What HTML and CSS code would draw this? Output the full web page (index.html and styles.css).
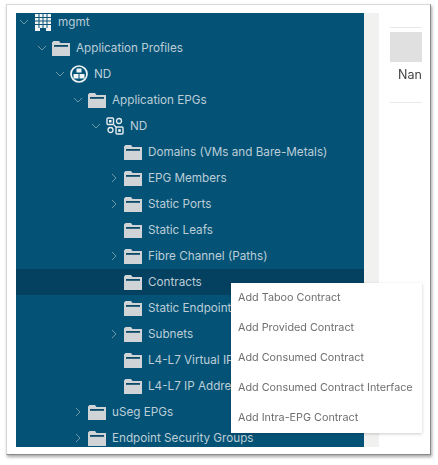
FILE: index.html
```html
<!DOCTYPE html>
<html lang="en">
  <head>
    <meta charset="UTF-8" />
    <meta name="viewport" content="width=device-width, initial-scale=1.0" />
    <title>mgmt tree</title>
    <link rel="stylesheet" href="styles.css">
  </head>

  <body>
    <svg class="defs" width="0" height="0">
      <symbol id="folder" viewBox="0 0 18 15">
        <path d="M0 1.500 1.500 0H7l1.500 2H18v13H0z" fill="#d0d4d7"/>
        <rect x="2" y="4" width="14" height="1.800" fill="#0b4a69"/>
      </symbol>
      <symbol id="chev-down" viewBox="0 0 10 10">
        <path d="M1 3l4 4 4-4" fill="none" stroke="#6f98ad"/>
      </symbol>
      <symbol id="chev-right" viewBox="0 0 10 10">
        <path d="M3 1l4 4-4 4" fill="none" stroke="#6f98ad"/>
      </symbol>
      <symbol id="tenant" viewBox="0 0 16 17">
        <path d="M0 0h16v17h-5v-3H5v3H0z" fill="#f2f5f6"/>
        <path d="M4 0v14M8 0v14M12 0v14M0 3.500h16M0 7h16M0 10.500h16" stroke="#0b5474" stroke-width="1"/>
      </symbol>
      <symbol id="profile" viewBox="0 0 18 18">
        <circle cx="9" cy="9" r="8" fill="none" stroke="#f2f5f6" stroke-width="1.700"/>
        <rect x="6.500" y="3.500" width="5" height="4" fill="#f2f5f6"/>
        <rect x="3.500" y="9" width="5" height="4.500" fill="#f2f5f6"/>
        <rect x="9.500" y="9" width="5" height="4.500" fill="#f2f5f6"/>
      </symbol>
      <symbol id="epg" viewBox="0 0 18 18">
        <rect x="1" y="1" width="6.500" height="6.500" rx="1" fill="none" stroke="#e6ecef" stroke-width="1.400"/>
        <rect x="3" y="3" width="2.500" height="2.500" fill="#f2f5f6"/>
        <circle cx="13" cy="4" r="2.500" fill="none" stroke="#e6ecef" stroke-width="1.300"/>
        <circle cx="4.500" cy="13" r="2.500" fill="none" stroke="#e6ecef" stroke-width="1.300"/>
        <rect x="10" y="10" width="7" height="7" rx="1" fill="none" stroke="#e6ecef" stroke-width="1.400"/>
        <rect x="12.200" y="12.200" width="2.600" height="2.600" fill="#f2f5f6"/>
        <path d="M7.500 7.500l3 3" stroke="#e6ecef" stroke-width="1.300"/>
      </symbol>
    </svg>

    <div class="frame">
      <div class="tree">
        <div class="row lvl0 first">
          <svg class="chev"><use href="#chev-down"/></svg>
          <svg class="icon tenant"><use href="#tenant"/></svg>
          <span>mgmt</span>
        </div>
        <div class="row lvl1">
          <svg class="chev"><use href="#chev-down"/></svg>
          <svg class="icon folder"><use href="#folder"/></svg>
          <span>Application Profiles</span>
        </div>
        <div class="row lvl2">
          <svg class="chev"><use href="#chev-down"/></svg>
          <svg class="icon"><use href="#profile"/></svg>
          <span>ND</span>
        </div>
        <div class="row lvl3">
          <svg class="chev"><use href="#chev-down"/></svg>
          <svg class="icon folder"><use href="#folder"/></svg>
          <span>Application EPGs</span>
        </div>
        <div class="row lvl4">
          <svg class="chev"><use href="#chev-down"/></svg>
          <svg class="icon"><use href="#epg"/></svg>
          <span>ND</span>
        </div>
        <div class="row lvl5">
          <i class="chev"></i>
          <svg class="icon folder"><use href="#folder"/></svg>
          <span>Domains (VMs and Bare-Metals)</span>
        </div>
        <div class="row lvl5">
          <svg class="chev"><use href="#chev-right"/></svg>
          <svg class="icon folder"><use href="#folder"/></svg>
          <span>EPG Members</span>
        </div>
        <div class="row lvl5">
          <svg class="chev"><use href="#chev-right"/></svg>
          <svg class="icon folder"><use href="#folder"/></svg>
          <span>Static Ports</span>
        </div>
        <div class="row lvl5">
          <i class="chev"></i>
          <svg class="icon folder"><use href="#folder"/></svg>
          <span>Static Leafs</span>
        </div>
        <div class="row lvl5">
          <svg class="chev"><use href="#chev-right"/></svg>
          <svg class="icon folder"><use href="#folder"/></svg>
          <span>Fibre Channel (Paths)</span>
        </div>
        <div class="row lvl5 selected">
          <i class="chev"></i>
          <svg class="icon folder"><use href="#folder"/></svg>
          <span>Contracts</span>
        </div>
        <div class="row lvl5">
          <i class="chev"></i>
          <svg class="icon folder"><use href="#folder"/></svg>
          <span>Static Endpoint</span>
        </div>
        <div class="row lvl5">
          <svg class="chev"><use href="#chev-right"/></svg>
          <svg class="icon folder"><use href="#folder"/></svg>
          <span>Subnets</span>
        </div>
        <div class="row lvl5">
          <i class="chev"></i>
          <svg class="icon folder"><use href="#folder"/></svg>
          <span>L4-L7 Virtual IPs</span>
        </div>
        <div class="row lvl5">
          <i class="chev"></i>
          <svg class="icon folder"><use href="#folder"/></svg>
          <span>L4-L7 IP Address Pool</span>
        </div>
        <div class="row lvl3">
          <svg class="chev"><use href="#chev-right"/></svg>
          <svg class="icon folder"><use href="#folder"/></svg>
          <span>uSeg EPGs</span>
        </div>
        <div class="row lvl3">
          <svg class="chev"><use href="#chev-right"/></svg>
          <svg class="icon folder"><use href="#folder"/></svg>
          <span>Endpoint Security Groups</span>
        </div>
      </div>

      <div class="scroll-strip"></div>

      <div class="side">
        <div class="side-head"></div>
        <div class="side-name">Nan</div>
      </div>

      <ul class="menu">
        <li>Add Taboo Contract</li>
        <li>Add Provided Contract</li>
        <li>Add Consumed Contract</li>
        <li>Add Consumed Contract Interface</li>
        <li>Add Intra-EPG Contract</li>
      </ul>
    </div>
  </body>
</html>
```

FILE: styles.css
```css
html,
body {
  margin: 0;
  height: 465px;
  overflow: hidden;
  background: #fff;
}

body {
  padding: 4px 7px 0 6px;
  box-sizing: border-box;
  font-family: Inter, "Liberation Sans", sans-serif;
}

.defs {
  position: absolute;
}

.frame {
  position: relative;
  display: flex;
  height: 451px;
  box-sizing: border-box;
  padding: 8px 0 7px 9px;
  background: #fff;
  border: 1px solid #d8d8d8;
  border-right-color: #8a8a8a;
  border-bottom-color: #8a8a8a;
  box-shadow: 1px 2px 3px rgba(0, 0, 0, 0.35);
  filter: blur(0.5px);
}

.tree {
  width: 348px;
  flex-shrink: 0;
  overflow: hidden;
  background: #045377;
  color: #bccdd6;
  font-size: 11.7px;
}

.row {
  display: flex;
  align-items: center;
  height: 26px;
}

.first {
  margin-top: -4px;
}

.lvl0 { padding-left: 3px; }
.lvl1 { padding-left: 21px; }
.lvl2 { padding-left: 39px; }
.lvl3 { padding-left: 57px; }
.lvl4 { padding-left: 75px; }
.lvl5 { padding-left: 93px; }

.selected {
  background: #04405f;
}

.chev {
  display: block;
  width: 10px;
  height: 10px;
  margin-right: 5px;
  flex-shrink: 0;
}

.icon {
  display: block;
  width: 18px;
  height: 18px;
  margin-right: 6px;
  flex-shrink: 0;
}

.folder {
  height: 15px;
}

.tenant {
  width: 16px;
  height: 17px;
  margin-left: 1px;
  margin-right: 7px;
}

.scroll-strip {
  width: 15px;
  flex-shrink: 0;
  background: #f1f1ef;
}

.side {
  width: 32px;
  height: 74px;
  margin: 14px 0 0 11px;
  overflow: hidden;
  border-top: 1px solid #e8e8e8;
  border-bottom: 1px solid #e8e8e8;
}

.side-head {
  height: 30px;
  margin-top: 4px;
  background: #e0e0e0;
}

.side-name {
  margin: 5px 0 0 8px;
  font-size: 12.5px;
  color: #444;
  white-space: nowrap;
}

.menu {
  position: absolute;
  left: 224px;
  top: 278px;
  width: 191px;
  margin: 0;
  padding: 0;
  list-style: none;
  background: #fff;
  box-shadow: 0 1px 3px rgba(0, 0, 0, 0.2);
  color: #6e6e6e;
  font-size: 10.8px;
}

.menu li {
  display: flex;
  align-items: center;
  height: 30px;
  box-sizing: border-box;
  padding: 0 0 2px 7px;
}
```
